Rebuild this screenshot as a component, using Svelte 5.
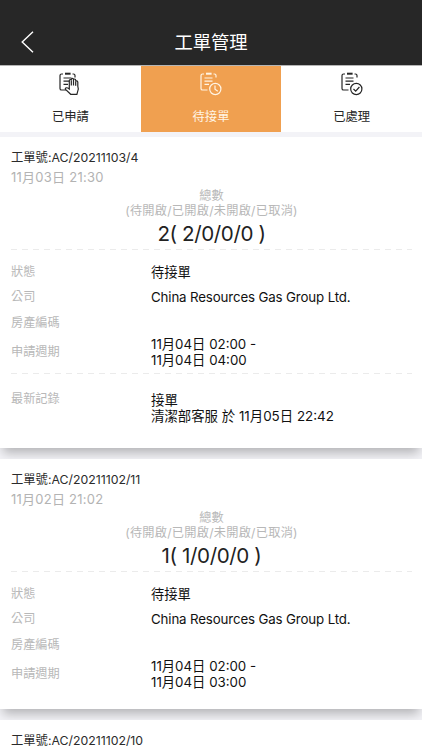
<script lang="ts">
	type Order = {
		no: string;
		detail?: {
			date: string;
			total: string;
			status: string;
			company: string;
			room: string;
			period: string[];
			log?: string[];
		};
	};

	const tabs = [
		{ key: 'applied', name: '已申請' },
		{ key: 'waiting', name: '待接單' },
		{ key: 'done', name: '已處理' }
	];
	let active = $state('waiting');

	const orders: Order[] = [
		{
			no: 'AC/20211103/4',
			detail: {
				date: '11月03日 21:30',
				total: '2( 2/0/0/0 )',
				status: '待接單',
				company: 'China Resources Gas Group Ltd.',
				room: '',
				period: ['11月04日 02:00 -', '11月04日 04:00'],
				log: ['接單', '清潔部客服 於 11月05日 22:42']
			}
		},
		{
			no: 'AC/20211102/11',
			detail: {
				date: '11月02日 21:02',
				total: '1( 1/0/0/0 )',
				status: '待接單',
				company: 'China Resources Gas Group Ltd.',
				room: '',
				period: ['11月04日 02:00 -', '11月04日 03:00']
			}
		},
		{ no: 'AC/20211102/10' }
	];
</script>

<div class="page">
	<header>
		<button class="back" aria-label="返回">
			<svg width="14" height="22" viewBox="0 0 14 22">
				<path d="M12 0.8 L1.2 11 L12 21.2" />
			</svg>
		</button>
		<h1>工單管理</h1>
	</header>

	<nav>
		{#each tabs as tab}
			<button class="tab" class:active={active === tab.key} onclick={() => (active = tab.key)}>
				<svg class="icon" width="24" height="24" viewBox="0 0 24 24">
					<path d="M5 2H3.6Q2 2 2 3.6V16.4Q2 18 3.6 18H8.5M14.5 2H15.4Q17 2 17 3.6V5.5" />
					<path class="clip" d="M7 1.7H12.6" />
					<path d="M5.5 6H13.5M5.5 9.2H13.5M5.5 12.4H10" />
					{#if tab.key === 'applied'}
						<path
							class="hand"
							d="M11.3 16V8.6Q11.3 7.5 12.3 7.5T13.3 8.6V7.4Q13.3 6.3 14.4 6.3T15.5 7.4V8.2Q15.5 7 16.6 7T17.7 8.2V9.8Q17.7 8.8 18.7 8.8T19.8 10V14.2Q21 17.2 19.6 19.7L18.9 22.3H12.7L7.8 17.7Q6.6 16.3 8.2 15.8Q9.4 15.5 11.3 17Z"
						/>
						<path d="M13.3 8.6V13.5M15.5 8V13.5M17.7 9.8V13.8" />
					{:else if tab.key === 'waiting'}
						<circle class="disc" cx="16.3" cy="17" r="5.6" />
						<path d="M16 13.4V17.2L18.8 19.2" />
					{:else}
						<circle class="disc" cx="16.3" cy="17" r="5.6" />
						<path d="M13.5 17L15.7 19.1L19.4 15" />
					{/if}
				</svg>
				<span>{tab.name}</span>
			</button>
		{/each}
	</nav>

	<main>
		{#each orders as { no, detail }}
			<article>
				<div class="no">工單號:{no}</div>
				{#if detail}
					<div class="date">{detail.date}</div>
					<div class="sum">
						<div class="hint">總數</div>
						<div class="hint states">(待開啟/已開啟/未開啟/已取消)</div>
						<div class="total">{detail.total}</div>
					</div>
					<div class="dash"></div>
					<dl>
						<dt>狀態</dt>
						<dd>{detail.status}</dd>
						<dt>公司</dt>
						<dd class="company">{detail.company}</dd>
						<dt>房產編碼</dt>
						<dd>{detail.room}</dd>
					</dl>
					<dl class="period">
						<dt>申請週期</dt>
						<dd>
							{#each detail.period as line}
								<div>{line}</div>
							{/each}
						</dd>
					</dl>
					{#if detail.log}
						<div class="dash"></div>
						<dl class="log">
							<dt>最新記錄</dt>
							<dd>
								{#each detail.log as line}
									<div>{line}</div>
								{/each}
							</dd>
						</dl>
					{/if}
				{/if}
			</article>
		{/each}
	</main>
</div>

<style>
	:global(body) {
		background: #f3f3f7;
	}
	.page {
		height: 750px;
		overflow: hidden;
		display: flex;
		flex-direction: column;
		font-family: Inter, 'Noto Sans CJK TC', sans-serif;
		color: #111;
	}
	button {
		border: 0;
		padding: 0;
		background: none;
		font: inherit;
		color: inherit;
	}
	header {
		flex: none;
		box-sizing: border-box;
		height: 65px;
		padding: 19px 21px 0;
		display: grid;
		grid-template-columns: 40px 1fr 40px;
		align-items: center;
		background: #272727;
		color: #fff;
	}
	.back {
		display: flex;
	}
	.back path {
		fill: none;
		stroke: #fff;
		stroke-width: 1.4;
	}
	h1 {
		margin: 0;
		font-size: 18.3px;
		line-height: 24px;
		font-weight: 400;
		text-align: center;
	}
	nav {
		flex: none;
		display: grid;
		grid-template-columns: repeat(3, 1fr);
		box-sizing: border-box;
		height: 67px;
		border-top: 1px solid #b5b5b5;
		background: #fff;
	}
	.tab {
		display: flex;
		flex-direction: column;
		align-items: center;
		padding-top: 6px;
		color: #262626;
		font-size: 12.3px;
		line-height: 18px;
	}
	.tab span {
		margin-top: 12px;
	}
	.tab.active {
		background: #f0a050;
		color: #fff4e4;
	}
	.icon {
		flex: none;
		fill: none;
		stroke: currentColor;
		stroke-width: 1.2;
	}
	.clip {
		stroke-width: 2;
	}
	.hand,
	.disc {
		fill: #fff;
	}
	.active .disc {
		fill: #f0a050;
	}
	main {
		display: flex;
		flex-direction: column;
		gap: 11px;
		padding-top: 5px;
	}
	article {
		flex: none;
		box-sizing: border-box;
		height: 250px;
		padding: 11px 10px 0 11px;
		background: #fff;
		box-shadow: 0 8px 10px -3px rgba(0, 0, 0, 0.26);
	}
	article:has(.log) {
		height: 311px;
	}
	.no {
		font-size: 12.3px;
		line-height: 19px;
		color: #2b2b2b;
	}
	.date {
		font-size: 13px;
		line-height: 20px;
		letter-spacing: 0.25px;
		color: #b3b3b3;
	}
	.sum {
		padding-top: 2px;
		text-align: center;
	}
	.hint {
		font-size: 12.2px;
		line-height: 14.5px;
		color: #b8b8b8;
	}
	.states {
		letter-spacing: 0.25px;
	}
	.total {
		font-size: 20.6px;
		line-height: 31px;
		letter-spacing: -0.4px;
		color: #222;
	}
	.dash {
		height: 1px;
		background: repeating-linear-gradient(90deg, #ebebeb 0 6px, transparent 6px 11px);
	}
	dl {
		display: grid;
		grid-template-columns: 140px 1fr;
		grid-auto-rows: 25.5px;
		margin: 9px 0 0;
		align-items: center;
	}
	dt {
		font-size: 12.2px;
		line-height: 18px;
		color: #b8b8b8;
	}
	dd {
		margin: 0;
		font-size: 13.3px;
		line-height: 16px;
	}
	.company {
		letter-spacing: -0.14px;
	}
	.period {
		grid-auto-rows: 32px;
		margin: 0 0 5px;
	}
	.log {
		grid-auto-rows: 32px;
		margin-top: 18px;
		align-items: start;
	}
	.log dt {
		margin-top: -2px;
	}
	.log dd {
		font-size: 13.4px;
	}
</style>
